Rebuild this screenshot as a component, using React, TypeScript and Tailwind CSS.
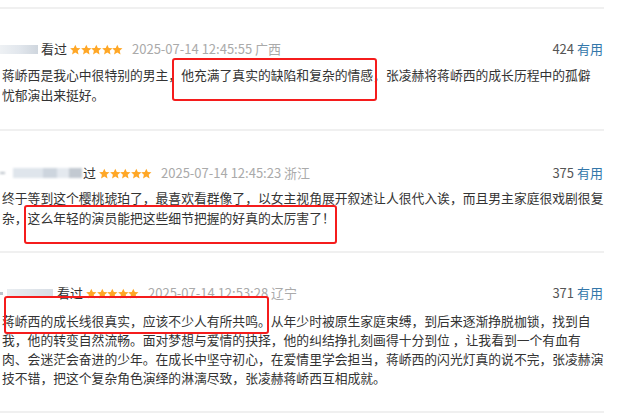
import type { ReactNode } from "react";

type Review = {
  date: string;
  votes: number;
  lines: string[];
  pt: string;
  mt: string;
  leading: string;
  pb: string;
  name: ReactNode;
};

const reviews: Review[] = [
  {
    date: "2025-07-14 12:45:55 广西",
    votes: 424,
    pt: "pt-[30px]",
    mt: "mt-[6px]",
    leading: "leading-[20px]",
    pb: "pb-[24px]",
    name: (
      <>
        <div className="h-[9px] w-[38px] bg-gradient-to-r from-[#eef1f4] via-[#e2e7ed] to-[#cfd6de] blur-[0.6px]" />
        <span className="ml-[3px] text-[#333]">看过</span>
      </>
    ),
    lines: [
      "蒋峤西是我心中很特别的男主，他充满了真实的缺陷和复杂的情感，张凌赫将蒋峤西的成长历程中的孤僻",
      "忧郁演出来挺好。",
    ],
  },
  {
    date: "2025-07-14 12:45:23 浙江",
    votes: 375,
    pt: "pt-[32px]",
    mt: "mt-[5px]",
    leading: "leading-[20px]",
    pb: "pb-[23px]",
    name: (
      <>
        <div className="flex h-[12px] w-[82px] items-center blur-[0.8px]">
          <div className="h-[2px] w-[5px] bg-[#b9c0c8]" />
          <div className="ml-[8px] h-[10px] w-[30px] bg-[#dfe5ec]" />
          <div className="h-[10px] w-[14px] bg-[#cdd5de]" />
          <div className="h-[10px] w-[12px] bg-[#e4e9ef]" />
          <div className="h-[10px] w-[13px] bg-[#c2c9d1]" />
        </div>
        <span className="ml-[1px] text-[#333]">过</span>
      </>
    ),
    lines: [
      "终于等到这个樱桃琥珀了，最喜欢看群像了，以女主视角展开叙述让人很代入诶，而且男主家庭很戏剧很复",
      "杂，这么年轻的演员能把这些细节把握的好真的太厉害了！",
    ],
  },
  {
    date: "2025-07-14 12:53:28 辽宁",
    votes: 371,
    pt: "pt-[30px]",
    mt: "mt-[8px]",
    leading: "leading-[19px]",
    pb: "pb-[24px]",
    name: (
      <>
        <div className="flex h-[10px] w-[53px] items-center blur-[0.7px]">
          <div className="h-[3px] w-[3px] bg-[#bcc3cb]" />
          <div className="ml-[4px] h-[9px] w-[46px] bg-gradient-to-r from-[#e9edf1] to-[#d8dee5]" />
        </div>
        <span className="ml-[4px] text-[#333]">看过</span>
      </>
    ),
    lines: [
      "蒋峤西的成长线很真实，应该不少人有所共鸣。从年少时被原生家庭束缚，到后来逐渐挣脱枷锁，找到自",
      "我，他的转变自然流畅。面对梦想与爱情的抉择，他的纠结挣扎刻画得十分到位 ，让我看到一个有血有",
      "肉、会迷茫会奋进的少年。在成长中坚守初心，在爱情里学会担当，蒋峤西的闪光灯真的说不完，张凌赫演",
      "技不错，把这个复杂角色演绎的淋漓尽致，张凌赫蒋峤西互相成就。",
    ],
  },
];

function Stars() {
  return (
    <div className="ml-[3px] flex">
      {[0, 1, 2, 3, 4].map((i) => (
        <svg key={i} width="10.6" height="11" viewBox="1.2 1.4 21.6 20.6">
          <path
            d="M12 1.8l3.1 6.9 7.4.7-5.6 5 1.7 7.4L12 17.9l-6.6 3.9 1.7-7.4-5.6-5 7.4-.7z"
            fill="#ffa726"
          />
        </svg>
      ))}
    </div>
  );
}

export default function App() {
  return (
    <div className="relative h-[414px] w-[640px] overflow-hidden bg-white pt-[7px] font-['Microsoft_YaHei','Noto_Sans_CJK_SC',sans-serif]">
      <div className="w-[604px] border-b-2 border-[#f0f0f0]">
        {reviews.map((r) => (
          <div
            key={r.date}
            className={`border-t-2 border-[#f0f0f0] ${r.pt} ${r.pb}`}
          >
            <div className="flex h-5 items-center text-[13px] leading-5">
              {r.name}
              <Stars />
              <span className="ml-[9px] text-[#aaa]">{r.date}</span>
              <span className="ml-auto pr-[1px] text-[#555]">
                {r.votes} <span className="text-[#3377aa]">有用</span>
              </span>
            </div>
            <div
              className={`${r.mt} pl-[2px] text-[12.8px] text-[#333] ${r.leading}`}
            >
              {r.lines.map((l) => (
                <p key={l} className="whitespace-nowrap">
                  {l}
                </p>
              ))}
            </div>
          </div>
        ))}
      </div>

      <div className="pointer-events-none absolute left-[172px] top-[58px] h-[43px] w-[205px] rounded-[3px] border-[2.5px] border-[#f51c1c]" />
      <div className="pointer-events-none absolute left-[24px] top-[205px] h-[39px] w-[313px] rounded-[3px] border-[2.5px] border-[#f51c1c]" />
      <div className="pointer-events-none absolute left-[4px] top-[296px] h-[38px] w-[265px] rounded-[3px] border-[2.5px] border-[#f51c1c]" />
    </div>
  );
}
